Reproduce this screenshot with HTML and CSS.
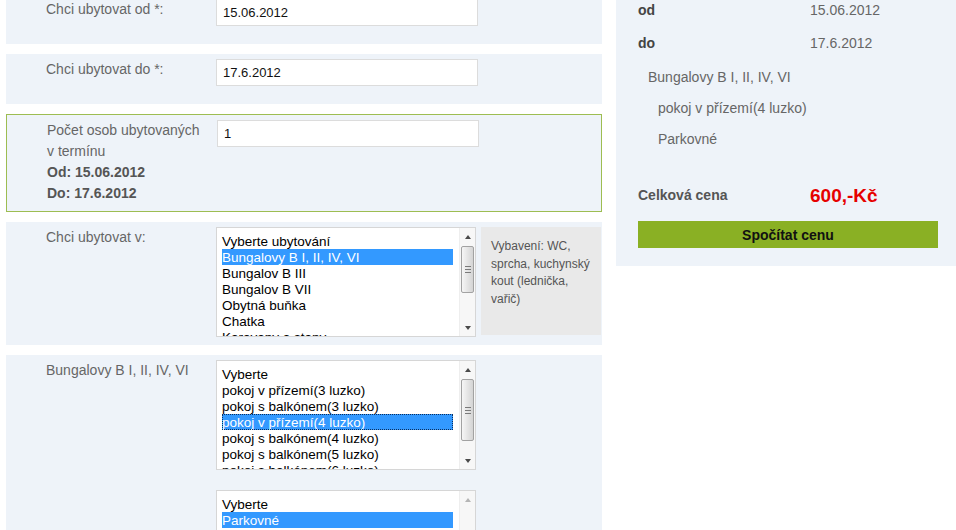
FILE: index.html
```html
<!DOCTYPE html>
<html lang="cs">
<head>
  <meta charset="UTF-8" />
  <meta name="viewport" content="width=device-width, initial-scale=1.0"/>
  <title>Rezervace ubytování</title>
  <link rel="stylesheet" href="styles.css">
</head>
<body>
  <div class="page">
    <!-- Reservation form -->
    <form class="form-col">
      <div class="row">
        <label class="lbl">Chci ubytovat od *:</label>
        <input class="field" type="text" name="date_from" value="15.06.2012" />
      </div>

      <div class="row">
        <label class="lbl">Chci ubytovat do *:</label>
        <input class="field" type="text" name="date_to" value="17.6.2012" />
      </div>

      <div class="row row-hl">
        <div class="lbl">
          Počet osob ubytovaných v termínu<br>
          <b>Od: 15.06.2012</b><br>
          <b>Do: 17.6.2012</b>
        </div>
        <input class="field" type="text" name="persons" value="1" />
      </div>

      <div class="row">
        <label class="lbl">Chci ubytovat v:</label>
        <div class="listbox">
          <div class="opts">
            <div class="opt">Vyberte ubytování</div>
            <div class="opt selected">Bungalovy B I, II, IV, VI</div>
            <div class="opt">Bungalov B III</div>
            <div class="opt">Bungalov B VII</div>
            <div class="opt">Obytná buňka</div>
            <div class="opt">Chatka</div>
            <div class="opt">Karavany a stany</div>
          </div>
          <div class="sb">
            <div class="sb-btn up"></div>
            <div class="sb-track">
              <div class="thumb" style="margin-top: 1px; height: 47px;"><span class="grip"></span></div>
            </div>
            <div class="sb-btn down"></div>
          </div>
        </div>
        <div class="info">Vybavení: WC, sprcha, kuchynský kout (lednička, vařič)</div>
      </div>

      <div class="row">
        <label class="lbl">Bungalovy B I, II, IV, VI</label>
        <div class="stack">
          <div class="listbox">
            <div class="opts">
              <div class="opt">Vyberte</div>
              <div class="opt">pokoj v přízemí(3 luzko)</div>
              <div class="opt">pokoj s balkónem(3 luzko)</div>
              <div class="opt selected focused">pokoj v přízemí(4 luzko)</div>
              <div class="opt">pokoj s balkónem(4 luzko)</div>
              <div class="opt">pokoj s balkónem(5 luzko)</div>
              <div class="opt">pokoj s balkónem(6 luzko)</div>
            </div>
            <div class="sb">
              <div class="sb-btn up"></div>
              <div class="sb-track">
                <div class="thumb" style="margin-top: 1px; height: 62px;"><span class="grip"></span></div>
              </div>
              <div class="sb-btn down"></div>
            </div>
          </div>

          <div class="listbox">
            <div class="opts">
              <div class="opt">Vyberte</div>
              <div class="opt selected">Parkovné</div>
            </div>
            <div class="sb disabled">
              <div class="sb-btn up"></div>
              <div class="sb-track"></div>
              <div class="sb-btn down"></div>
            </div>
          </div>
        </div>
      </div>
    </form>

    <!-- Order summary -->
    <div class="summary">
      <div class="sum-row">
        <span class="sum-key">od</span>
        <span class="sum-val">15.06.2012</span>
      </div>
      <div class="sum-row">
        <span class="sum-key">do</span>
        <span class="sum-val">17.6.2012</span>
      </div>
      <div class="sum-items">
        <div class="sum-item">Bungalovy B I, II, IV, VI</div>
        <div class="sum-item sub">pokoj v přízemí(4 luzko)</div>
        <div class="sum-item sub">Parkovné</div>
      </div>

      <div class="sum-row total">
        <span class="sum-key">Celková cena</span>
        <span class="price">600,-Kč</span>
      </div>
      <button class="calc" type="button">Spočítat cenu</button>
    </div>
  </div>
</body>
</html>
```

FILE: styles.css
```css
* {
  box-sizing: border-box;
}

html, body {
  overflow: hidden;
}

body {
  margin: 0;
  font-family: "Liberation Sans", Arial, sans-serif;
  background: #fff;
  color: #666;
}

.page {
  display: flex;
  align-items: flex-start;
  gap: 14px;
  padding-left: 6px;
  margin-top: -6px;
}

/* left column: form rows */
.form-col {
  width: 596px;
  margin: 0;
  display: flex;
  flex-direction: column;
  gap: 10px;
}

.row {
  display: flex;
  align-items: flex-start;
  min-height: 50px;
  padding: 5px 1px 8px 40px;
  background: #eef3f9;
}

.row-hl {
  border: 1px solid #9dbd52;
  padding-bottom: 7px;
}

.lbl {
  width: 160px;
  margin-right: 10px;
  font-size: 14px;
  line-height: 21px;
  color: #666;
}

.lbl b {
  color: #555;
}

.field {
  width: 262px;
  height: 27px;
  margin: 0;
  padding: 0 6px;
  border: 1px solid #dcdcdc;
  background: #fff;
  font-family: "Liberation Sans", Arial, sans-serif;
  font-size: 13px;
  color: #111;
  outline: none;
}

/* list boxes */
.stack {
  display: flex;
  flex-direction: column;
  gap: 20px;
}

.listbox {
  display: flex;
  width: 260px;
  height: 110px;
  border: 1px solid #d6d6d6;
  background: #fff;
}

.opts {
  flex: 1;
  padding: 5px 6px 0 5px;
  overflow: hidden;
}

.opt {
  height: 16px;
  font-size: 13.5px;
  line-height: 17px;
  color: #000;
  white-space: nowrap;
}

.opt.selected {
  background: #3399ff;
  color: #fff;
}

.opt.focused {
  outline: 1px dotted #0b2f5e;
  outline-offset: -1px;
}

.sb {
  width: 16px;
  display: flex;
  flex-direction: column;
  background: #f7f7f7;
  border-left: 1px solid #eee;
}

.sb-btn {
  height: 17px;
  display: flex;
  align-items: center;
  justify-content: center;
}

.sb-btn::before {
  content: "";
  border-left: 3px solid transparent;
  border-right: 3px solid transparent;
}

.sb-btn.up::before {
  border-bottom: 4px solid #4a4a4a;
}

.sb-btn.down::before {
  border-top: 4px solid #4a4a4a;
}

.sb.disabled .sb-btn.up::before {
  border-bottom-color: #b5b5b5;
}

.sb.disabled .sb-btn.down::before {
  border-top-color: #b5b5b5;
}

.sb-track {
  flex: 1;
  padding: 0 1px;
}

.thumb {
  display: flex;
  align-items: center;
  justify-content: center;
  border: 1px solid #a2a2a2;
  border-radius: 2px;
  background: linear-gradient(to right, #f6f6f6, #d4d4d4);
}

.grip {
  width: 6px;
  height: 7px;
  background: repeating-linear-gradient(#7a7a7a 0 1px, transparent 1px 3px);
}

.info {
  width: 120px;
  height: 108px;
  margin-left: 5px;
  padding: 11px 6px 0 10px;
  background: #e9e9e9;
  font-size: 12px;
  line-height: 17.5px;
  color: #555;
}

/* right column: summary */
.summary {
  width: 340px;
  padding: 0 18px 18px 22px;
  background: #eef3f9;
}

.sum-row {
  display: flex;
  height: 33px;
  line-height: 33px;
  font-size: 14px;
}

.sum-key {
  width: 172px;
  font-weight: bold;
  color: #444;
}

.sum-val {
  color: #666;
}

.sum-items {
  padding-top: 2px;
}

.sum-item {
  padding-left: 10px;
  font-size: 14px;
  line-height: 31px;
  color: #666;
}

.sum-item.sub {
  padding-left: 20px;
}

.total {
  margin-top: 24px;
}

.total .sum-key {
  color: #555;
}

.price {
  font-size: 19px;
  font-weight: bold;
  color: #e60000;
}

.calc {
  display: block;
  width: 300px;
  height: 27px;
  margin-top: 9px;
  border: none;
  background: #8ab024;
  font-family: "Liberation Sans", Arial, sans-serif;
  font-size: 14px;
  font-weight: bold;
  color: #111;
  cursor: pointer;
}

.calc:hover {
  background: #7a9d1f;
}
```
